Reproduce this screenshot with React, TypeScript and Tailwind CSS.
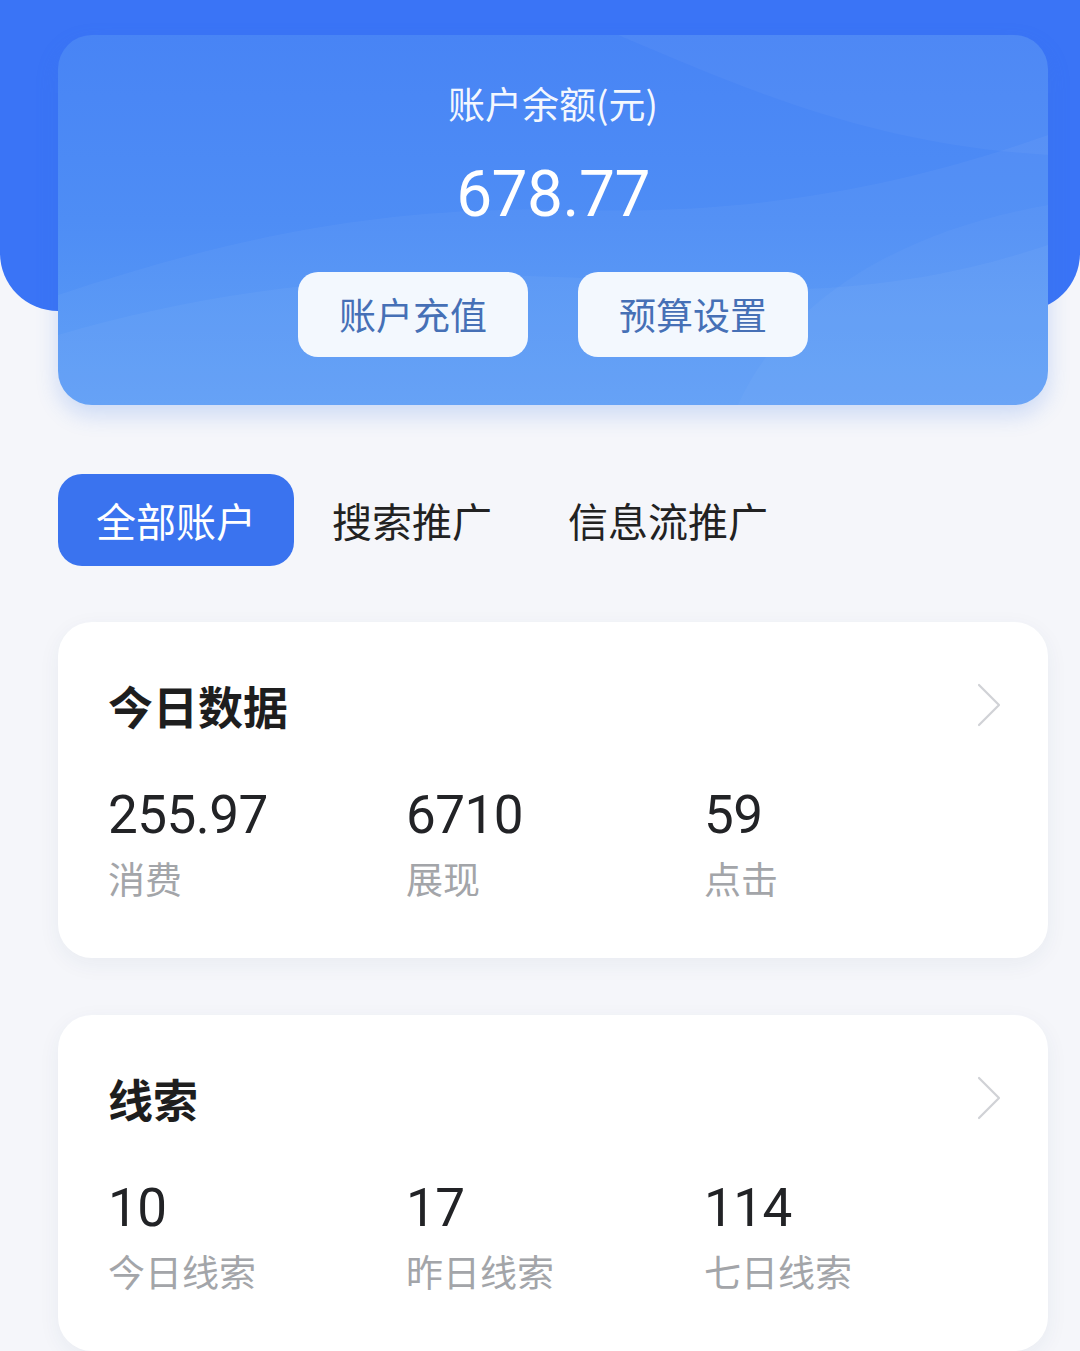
import React from "react";

const cjk = "font-['Noto_Sans_CJK_SC','Noto_Sans',sans-serif]";
const num = "font-['Roboto','Noto_Sans',sans-serif]";

function Chevron() {
  return (
    <svg width="26" height="46" viewBox="0 0 26 46" fill="none" className="shrink-0">
      <path d="M3 3 L23 23 L3 43" stroke="#d0d2d6" strokeWidth="2.2" strokeLinecap="round" strokeLinejoin="round" />
    </svg>
  );
}

function StatCard({
  title,
  items,
}: {
  title: string;
  items: { value: string; label: string }[];
}) {
  return (
    <div className="ml-[58px] mr-[32px] rounded-[34px] bg-white shadow-[0_6px_22px_rgba(40,60,110,0.06)] pl-[50px] pr-[46px] pt-[61px] pb-[61px]">
      <div className="flex items-center justify-between h-[44px]">
        <div className={`${cjk} text-[45px] leading-none font-bold text-[#1e1e1e]`}>{title}</div>
        <Chevron />
      </div>
      <div className="grid grid-cols-[298px_298px_298px] mt-[62px]">
        {items.map((it) => (
          <div key={it.label} className="flex flex-col">
            <div className={`${num} text-[53px] leading-[52px] tracking-[-0.5px] text-[#222326]`}>{it.value}</div>
            <div className={`${cjk} text-[37px] leading-none text-[#a3a5a9] mt-[19px]`}>{it.label}</div>
          </div>
        ))}
      </div>
    </div>
  );
}

export default function App() {
  return (
    <div className="relative w-[1080px] h-[1351px] overflow-hidden bg-[#f5f6fa]">
      {/* blue header backdrop */}
      <div className="absolute left-0 top-0 w-[1080px] h-[311px] bg-[#3a74f6] rounded-b-[58px]" />

      <div className="relative pt-[35px]">
        {/* balance card */}
        <div className="relative ml-[58px] mr-[32px] h-[370px] rounded-[34px] overflow-hidden bg-gradient-to-b from-[#4884f5] via-[#4e8df5] to-[#5a9cf6] shadow-[0_10px_22px_rgba(60,120,230,0.22)]">
          <svg className="absolute inset-0" width="990" height="370" viewBox="0 0 990 370" fill="none">
            <path d="M0 260 C 180 200, 330 170, 520 175 C 700 180, 850 150, 990 100 L990 370 L0 370 Z" fill="#ffffff" fillOpacity="0.04" />
            <path d="M0 300 C 200 240, 420 230, 620 250 C 780 265, 900 240, 990 210 L990 370 L0 370 Z" fill="#ffffff" fillOpacity="0.04" />
            <path d="M560 0 C 700 60, 820 110, 990 120 L990 0 Z" fill="#ffffff" fillOpacity="0.035" />
            <path d="M680 370 C 720 280, 820 200, 990 170 L990 370 Z" fill="#ffffff" fillOpacity="0.03" />
          </svg>
          <div className="relative flex flex-col items-center pt-[48px]">
            <div className={`${cjk} text-[37px] leading-[40px] text-white/95`}>账户余额(元)</div>
            <div className={`${num} text-[64px] leading-[64px] tracking-[-0.5px] text-white mt-[40px]`}>678.77</div>
            <div className="flex gap-[50px] mt-[45px]">
              <button className={`${cjk} w-[230px] h-[85px] rounded-[20px] bg-[#f3f8fe] text-[37px] text-[#4670b6] flex items-center justify-center`}>
                账户充值
              </button>
              <button className={`${cjk} w-[230px] h-[85px] rounded-[20px] bg-[#f3f8fe] text-[37px] text-[#4670b6] flex items-center justify-center`}>
                预算设置
              </button>
            </div>
          </div>
        </div>

        {/* tabs */}
        <div className="flex ml-[58px] mt-[69px]">
          <div className={`${cjk} h-[92px] px-[38px] rounded-[24px] bg-[#3a73ef] text-white text-[40px] flex items-center`}>全部账户</div>
          <div className={`${cjk} h-[92px] px-[38px] text-[#222] text-[40px] flex items-center`}>搜索推广</div>
          <div className={`${cjk} h-[92px] px-[38px] text-[#222] text-[40px] flex items-center`}>信息流推广</div>
        </div>

        <div className="mt-[56px]">
          <StatCard
            title="今日数据"
            items={[
              { value: "255.97", label: "消费" },
              { value: "6710", label: "展现" },
              { value: "59", label: "点击" },
            ]}
          />
        </div>
        <div className="mt-[57px]">
          <StatCard
            title="线索"
            items={[
              { value: "10", label: "今日线索" },
              { value: "17", label: "昨日线索" },
              { value: "114", label: "七日线索" },
            ]}
          />
        </div>
      </div>
    </div>
  );
}
